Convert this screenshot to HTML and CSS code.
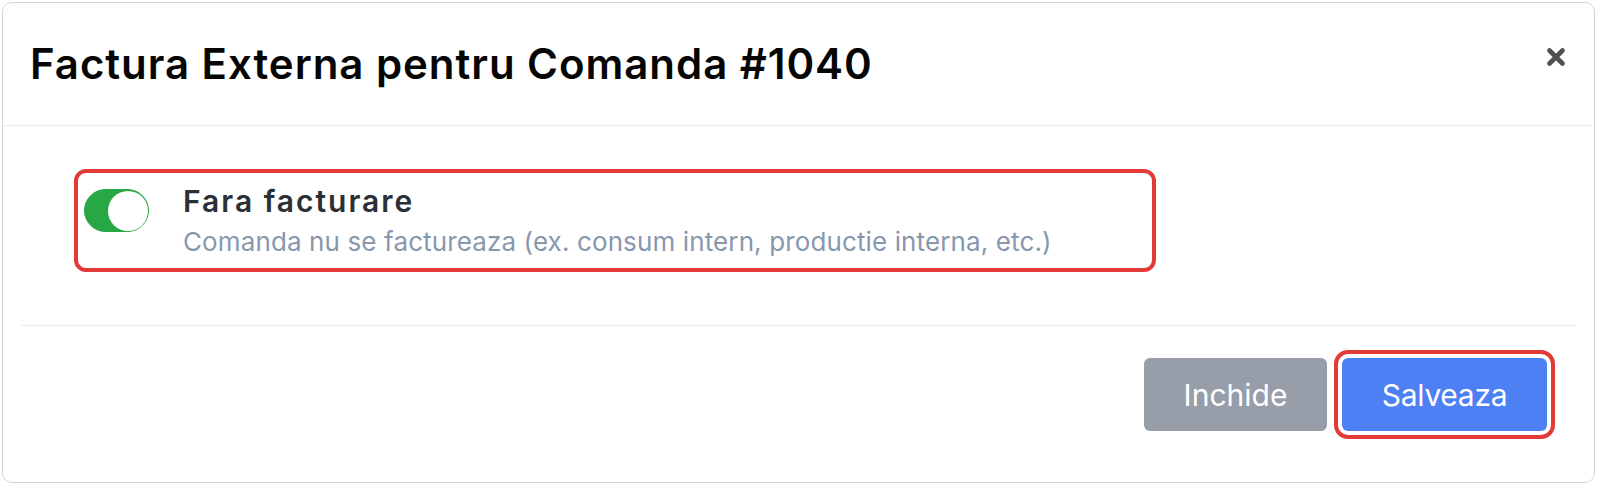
FILE: index.html
```html
<!DOCTYPE html>
<html lang="ro">
<head>
<meta charset="utf-8">
<title>Factura Externa</title>
<link rel="stylesheet" href="styles.css">
</head>
<body>
<div class="modal">
  <div class="modal-header">
    <h5 class="modal-title">Factura Externa pentru Comanda #1040</h5>
    <button class="btn-close" type="button" aria-label="Close">
      <svg viewBox="0 0 20 20" width="20" height="20" aria-hidden="true">
        <path d="M3.5 3.5 L16.5 16.5 M16.5 3.5 L3.5 16.5" stroke="#505050" stroke-width="4.6" stroke-linecap="round" fill="none"/>
      </svg>
    </button>
  </div>
  <div class="modal-body">
    <div class="switch-box">
      <span class="toggle" role="switch" aria-checked="true"></span>
      <div class="switch-text">
        <div class="switch-label">Fara facturare</div>
        <div class="switch-help">Comanda nu se factureaza (ex. consum intern, productie interna, etc.)</div>
      </div>
    </div>
    <div class="divider"></div>
  </div>
  <div class="modal-footer">
    <button class="btn btn-secondary" type="button">Inchide</button>
    <button class="btn btn-primary btn-highlight" type="button">Salveaza</button>
  </div>
</div>
</body>
</html>
```
FILE: styles.css
```css
html, body {
  margin: 0;
  padding: 0;
  background: #ffffff;
}

body {
  font-family: Inter, "Noto Sans", sans-serif;
}

.modal {
  box-sizing: border-box;
  margin: 2px 0 0 2px;
  width: 1593px;
  height: 481px;
  border: 1px solid #d4d4d4;
  border-radius: 10px;
  display: flex;
  flex-direction: column;
  overflow: hidden;
}

.modal-header {
  box-sizing: border-box;
  height: 123px;
  flex: none;
  display: flex;
  align-items: center;
  justify-content: space-between;
  padding: 0 28px 0 27px;
  border-bottom: 1px solid #e8eaed;
}

.modal-title {
  margin: 0;
  font-size: 42px;
  font-weight: 600;
  letter-spacing: 0.95px;
  color: #050505;
  line-height: 1;
}

.btn-close {
  border: 0;
  background: transparent;
  padding: 0;
  width: 21px;
  height: 21px;
  margin-bottom: 14px;
  display: flex;
  align-items: center;
  justify-content: center;
}

.btn-close svg {
  display: block;
}

.modal-body {
  padding: 43px 18px 0 18px;
}

.switch-box {
  box-sizing: border-box;
  margin-left: 53px;
  width: 1082px;
  height: 103px;
  border: 4px solid #e23b37;
  border-radius: 12px;
  padding: 0 0 0 6px;
  display: flex;
  align-items: flex-start;
}

.toggle {
  box-sizing: border-box;
  position: relative;
  flex: none;
  width: 65px;
  height: 43px;
  margin-top: 16px;
  border-radius: 22px;
  background: #28a745;
  border: 1px solid #28a745;
}

.toggle::after {
  content: "";
  position: absolute;
  top: 0.5px;
  right: 0.5px;
  width: 40px;
  height: 40px;
  border-radius: 50%;
  background: #ffffff;
}

.switch-text {
  margin-left: 34px;
  display: flex;
  flex-direction: column;
}

.switch-label {
  margin-top: 13px;
  font-size: 30px;
  line-height: 30px;
  font-weight: 600;
  letter-spacing: 2px;
  color: #2b3036;
}

.switch-help {
  margin-top: 11px;
  font-size: 26px;
  line-height: 30px;
  font-weight: 400;
  letter-spacing: 0.12px;
  color: #8797ae;
}

.divider {
  height: 1px;
  margin-top: 53px;
  background: #e8eaed;
}

.modal-footer {
  display: flex;
  justify-content: flex-end;
  gap: 15px;
  padding: 32px 47px 0 0;
}

.btn {
  box-sizing: border-box;
  height: 73px;
  border: 0;
  border-radius: 6px;
  color: #ffffff;
  font-family: Inter, "Noto Sans", sans-serif;
  font-size: 30px;
  font-weight: 400;
  padding: 0;
  display: flex;
  align-items: center;
  justify-content: center;
}

.btn-secondary {
  width: 183px;
  background: #979da9;
}

.btn-primary {
  width: 205px;
  background: #4c80f4;
  letter-spacing: -0.3px;
}

.btn-highlight {
  outline: 4px solid #e23b37;
  outline-offset: 4px;
}
```
